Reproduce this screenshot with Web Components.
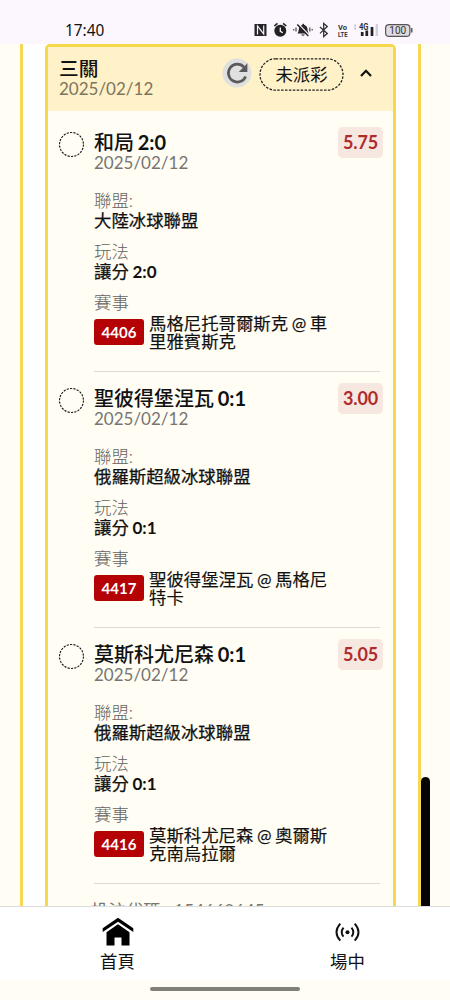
<!DOCTYPE html>
<html lang="zh-Hant">
<head>
<meta charset="utf-8">
<title>投注記錄</title>
<style>
html,body{margin:0;padding:0;height:1000px;overflow:hidden;background:#fffdf4}
body{font-family:Lato,"Noto Sans CJK TC",sans-serif;color:#111}
</style>
</head>
<body>
<bet-app></bet-app>
<script>
const define=(name,html)=>{
  const t=document.createElement('template');
  t.innerHTML=html;
  customElements.define(name,class extends HTMLElement{
    constructor(){super();this.attachShadow({mode:'open'}).append(t.content.cloneNode(true));}
  });
};

define('status-bar',`
<style>
:host{display:flex;box-sizing:border-box;height:44px;background:#fcf6ff;padding:20px 37px 0 65px;justify-content:space-between;align-items:flex-start}
time{font:400 15.400px/21px "Noto Sans",sans-serif;color:#111}
svg{display:block}
text{font-family:Roboto,sans-serif;fill:#333}
</style>
<time>17:40</time>
<svg width="160" height="20" viewBox="253 20 160 20">
  <path d="M254.500 24h12v12h-12z" fill="#262329"/>
  <path d="M257.500 34.500v-8.500l4.800 6M263.700 25.500v8.500l-4-5" fill="none" stroke="#fcf6ff" stroke-width="1.200"/>
  <circle cx="280.300" cy="30.800" r="6" fill="#222"/>
  <path d="M274.300 26l3.200-2.600M286.300 26l-3.200-2.600" stroke="#222" stroke-width="1.600"/>
  <path d="M280.300 27.500v3.800l2.500 1.500" fill="none" stroke="#fcf6ff" stroke-width="1.300"/>
  <path d="M297.500 33.500c1.500-1.500 1-5.500 2.300-7q1-1.400 2.500-1.500c0-1.700 1.900-1.700 1.900 0q3 .8 3.300 4c.2 2 .3 3 1.500 4.500zM301 34.500h4q-2 2.700-4 0z" fill="#262329"/>
  <path d="M298.300 24l10.700 11" stroke="#fcf6ff" stroke-width="1.500"/>
  <path d="M297.300 24.500l11 11.500" stroke="#262329" stroke-width="1.500"/>
  <path d="M296 27.500v4M293.700 29v1.400M309.800 27.500v4M312.200 29v1.400" stroke="#555" stroke-width="1.300"/>
  <path d="M320 27l7.300 6.500-3.600 3V23.500l3.600 3L320 33.400" fill="none" stroke="#333" stroke-width="1.300"/>
  <text x="338" y="29.600" font-size="7.500" font-weight="700" textLength="9" lengthAdjust="spacingAndGlyphs">Vo</text>
  <text x="338" y="36.500" font-size="7.500" font-weight="700" textLength="9.500" lengthAdjust="spacingAndGlyphs">LTE</text>
  <path d="M355.200 24.500v2M355.200 27.500v2" stroke="#bbb" stroke-width="1.500"/>
  <text x="359" y="29.700" font-size="8.500" font-weight="700" textLength="9.500" lengthAdjust="spacingAndGlyphs">4G</text>
  <path d="M362.200 32v4M366.800 30.500v5.500M372 27v9" stroke="#222" stroke-width="2.700"/>
  <path d="M376.800 24v12" stroke="#d3ced8" stroke-width="2.300"/>
  <rect x="385.600" y="24.600" width="24.300" height="11.800" rx="3.500" fill="#dfdbe2" stroke="#555" stroke-width="1.200"/>
  <path d="M411.800 28v4.500" stroke="#555" stroke-width="1.400"/>
  <text x="389.300" y="34.300" font-size="10.300" textLength="17" lengthAdjust="spacingAndGlyphs">100</text>
</svg>`);

define('bet-leg',`
<style>
:host{display:grid;grid-template-columns:25px 289px;column-gap:10px;box-sizing:border-box;height:256px;padding:15px 0 0 11px}
.mark{margin-top:1px;display:block}
.body{display:flex;flex-direction:column}
.top{display:flex;justify-content:space-between;height:60px}
.title{font-size:20px;line-height:22px;font-weight:500;word-spacing:-1.300px}
.date,.label{font-size:17px;line-height:20px;color:#777570}
.label{font-size:17.400px;font-weight:300;color:#66645e}
.odds{box-sizing:border-box;width:45px;height:31px;margin-top:-4px;border-radius:5px;background:#f7e7e1;color:#ad2c2c;font-size:18px;line-height:31px;text-align:center;font-weight:700;letter-spacing:-.2px}
.value{font-size:17.400px;line-height:20px;margin-bottom:11px;font-weight:400;word-spacing:-.8px;-webkit-text-stroke:.25px #111}
.match{display:flex;gap:5px;height:38px}
.chip{box-sizing:border-box;width:50px;height:26px;margin-top:6px;background:#b50205;border-radius:3px;color:#fff;font-size:15px;line-height:26px;text-align:center;font-weight:700}
.teams{font-size:17.400px;line-height:18.600px;font-weight:400;white-space:nowrap;word-spacing:-.9px;-webkit-text-stroke:.15px #111;padding-top:1.500px}
.rule{height:1px;width:286px;margin-top:20px;background:#ddd9d3}
</style>
<svg class="mark" width="25" height="25"><circle cx="12.500" cy="12.500" r="12" fill="none" stroke="#222" stroke-width="1.200" stroke-dasharray="2.200 1.220"/></svg>
<div class="body">
  <div class="top"><div><div class="title"><slot name="pick"></slot></div><div class="date">2025/02/12</div></div><div class="odds"><slot name="odds"></slot></div></div>
  <div class="label">聯盟:</div><div class="value"><slot name="league"></slot></div>
  <div class="label">玩法</div><div class="value"><slot name="play"></slot></div>
  <div class="label">賽事</div>
  <div class="match"><div class="chip"><slot name="code"></slot></div><div class="teams"><slot name="teams"></slot></div></div>
  <div class="rule"></div>
</div>`);

define('bet-card',`
<style>
:host{display:block;box-sizing:border-box;width:351px;height:1000px;border:3px solid #f8d84b;border-radius:5px 5px 0 0;background:#fffdf4}
header{display:flex;box-sizing:border-box;height:64px;padding:0 20px 0 11px;background:#fff1c8}
.name{flex:1;padding-top:11px}
h2{margin:0;font-size:19.700px;line-height:21px;font-weight:500}
.date{font-size:17px;line-height:20px;color:#7d745d}
.refresh{margin:11px 7px 0 0}
.pill{position:relative;box-sizing:border-box;width:85px;height:33px;margin-top:11px;text-align:center;line-height:33px;font-size:17.400px}
.pill svg{position:absolute;left:0;top:0}
.arrow{margin:17px 0 0 15px}
.legs{padding-top:5px}
</style>
<header>
  <div class="name"><h2>三關</h2><div class="date">2025/02/12</div></div>
  <svg class="refresh" width="30" height="30" viewBox="0 0 30 30"><circle cx="15" cy="15" r="14.500" fill="#dfe0df"/><path d="M22 9.200A8.900 8.900 0 1 0 23.600 18.400" fill="none" stroke="#5a5a5a" stroke-width="2.700"/><path d="M25.400 5.300v8.700h-8.700z" fill="#5a5a5a"/></svg>
  <div class="pill"><svg width="85" height="33"><rect x="1" y=".8" width="83" height="31.400" rx="15.700" fill="none" stroke="#222" stroke-width="1.300" stroke-dasharray="2.500 1.400"/></svg>未派彩</div>
  <svg class="arrow" width="14" height="18" viewBox="0 0 14 18"><path d="M2 12l5-5.200 5 5.200" fill="none" stroke="#111" stroke-width="2.200"/></svg>
</header>
<div class="legs"><slot></slot></div>`);

define('bet-nav',`
<style>
:host{display:grid;grid-template-columns:235px 1fr;box-sizing:border-box;height:74px;background:#fff;border-top:1px solid #dcdcda}
div{display:flex;flex-direction:column;align-items:center;padding-top:10px;font-size:17.400px;line-height:26px}
div+div{padding-left:10px}
svg{height:32px}
</style>
<div><svg width="32" viewBox="0 0 32 32"><path d="M.7 15V11.200L16 .800 31.300 11.200V15L16 4.700z"/><path d="M4.500 28.500V15.200L16 7.300 27.500 15.200v13.300h-8v-8h-7v8z"/></svg>首頁</div>
<div><svg width="26" viewBox="0 0 26 32" fill="none" stroke="#111" stroke-width="1.900"><circle cx="12.500" cy="15.200" r="2" fill="#111" stroke="none"/><path d="M8.500 10.700q-3.600 4.500 0 9M16.500 10.700q3.600 4.500 0 9M5.300 6.700q-7.600 8.500 0 17M19.700 6.700q7.600 8.500 0 17"/></svg>場中</div>`);

define('bet-app',`
<style>
:host{display:flex;flex-direction:column;position:relative;width:450px;height:1000px;overflow:hidden;background:#fffdf4}
main{height:862px;overflow:hidden;display:flex;justify-content:center;padding-right:9px}
.frame{box-sizing:border-box;width:401px;height:862px;background:#fff;border:solid #f5d956;border-width:0 3px;padding-left:22px}
.thumb{position:absolute;left:421px;top:777px;width:9px;height:129px;border-radius:5px 5px 0 0;background:#050505}
.code{font-size:17.400px;line-height:22px;color:#77756f;padding:16px 0 0 43px;white-space:pre}
.gesture{display:flex;height:20px;justify-content:center;align-items:center}
.gesture i{width:150px;height:4px;margin-top:-2px;border-radius:2px;background:#807f79}
b{font-weight:700;-webkit-text-stroke:0}
[slot=play] b{font-size:17px}
</style>
<status-bar></status-bar>
<main><div class="frame"><bet-card>
<bet-leg><span slot="pick">和局 <b>2:0</b></span><span slot="odds">5.75</span><span slot="league">大陸冰球聯盟</span><span slot="play">讓分 <b>2:0</b></span><span slot="code">4406</span><span slot="teams">馬格尼托哥爾斯克 @ 車<br>里雅賓斯克</span></bet-leg>
<bet-leg><span slot="pick">聖彼得堡涅瓦 <b>0:1</b></span><span slot="odds">3.00</span><span slot="league">俄羅斯超級冰球聯盟</span><span slot="play">讓分 <b>0:1</b></span><span slot="code">4417</span><span slot="teams">聖彼得堡涅瓦 @ 馬格尼<br>特卡</span></bet-leg>
<bet-leg><span slot="pick">莫斯科尤尼森 <b>0:1</b></span><span slot="odds">5.05</span><span slot="league">俄羅斯超級冰球聯盟</span><span slot="play">讓分 <b>0:1</b></span><span slot="code">4416</span><span slot="teams">莫斯科尤尼森 @ 奧爾斯<br>克南烏拉爾</span></bet-leg>
<div class="code">投注代碼:  154660645</div>
</bet-card></div></main>
<div class="thumb"></div>
<bet-nav></bet-nav>
<div class="gesture"><i></i></div>`);
</script>
</body>
</html>
